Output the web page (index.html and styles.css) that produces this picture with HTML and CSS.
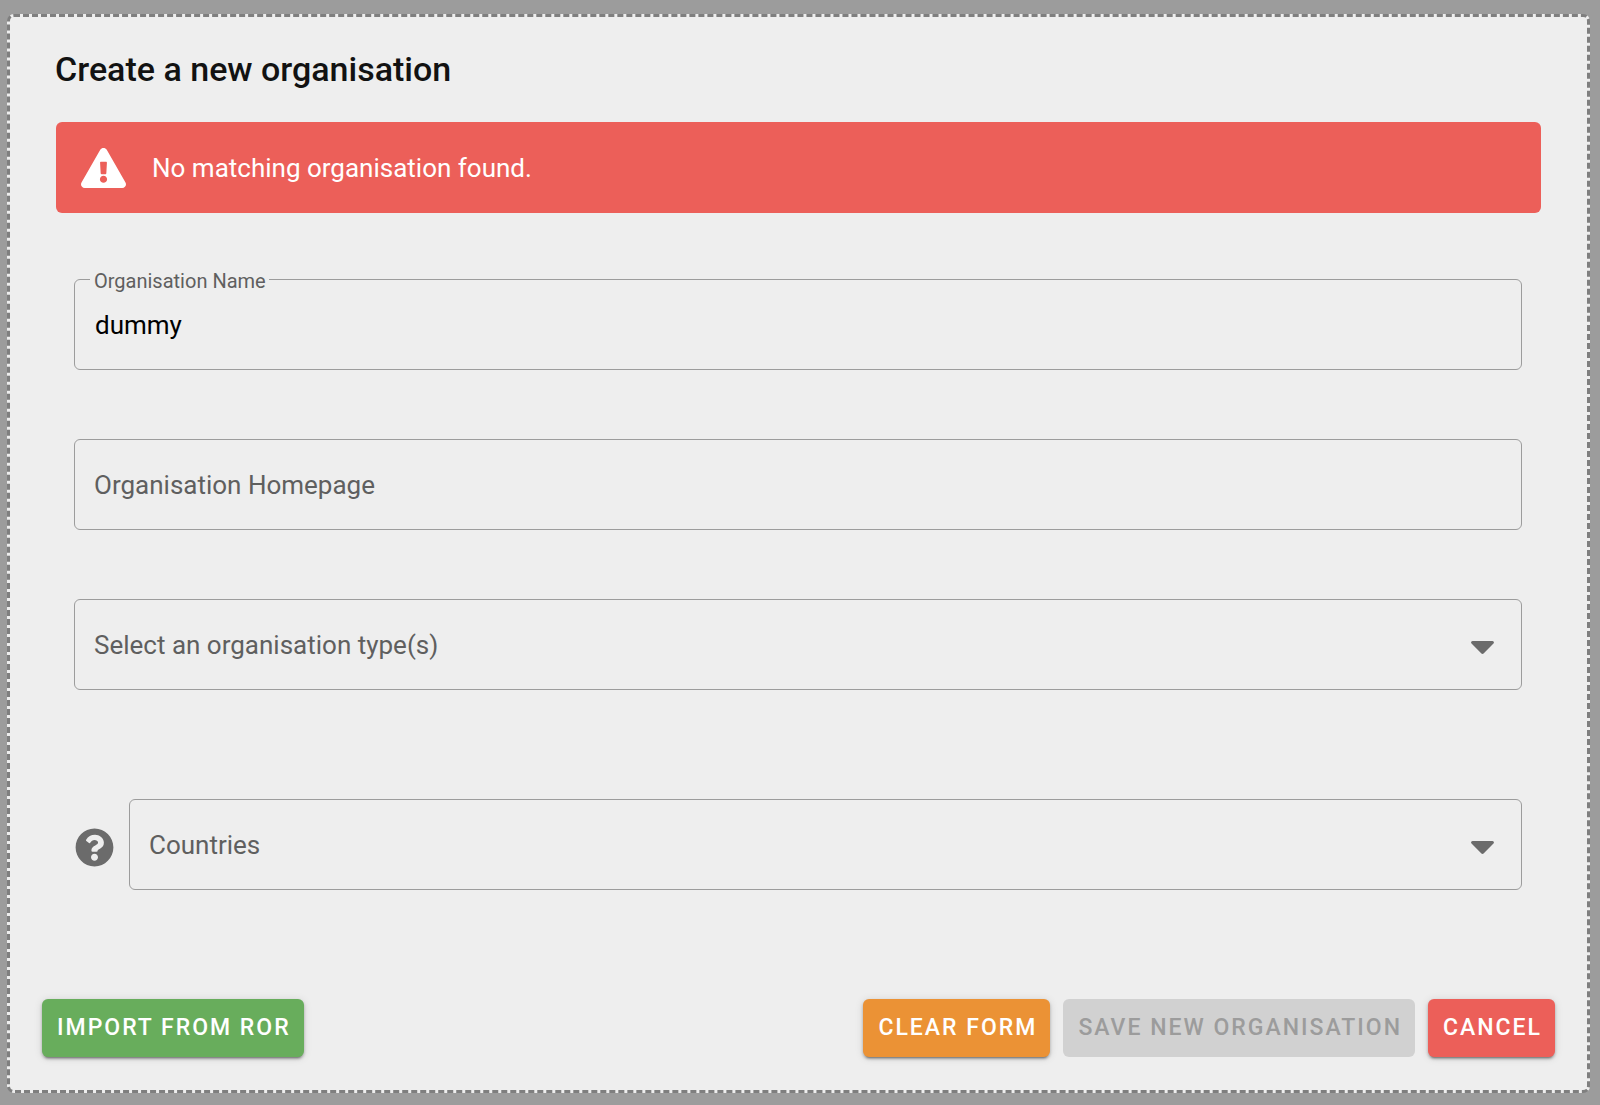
FILE: index.html
```html
<!DOCTYPE html>
<html lang="en">
<head>
  <meta charset="utf-8">
  <meta name="viewport" content="width=device-width, initial-scale=1">
  <title>Create a new organisation</title>
  <link rel="stylesheet" href="styles.css">
</head>
<body>
  <main class="card">
    <h1 class="card-title">Create a new organisation</h1>

    <div class="alert" role="alert">
      <svg class="alert-icon" viewBox="0 0 576 512" aria-hidden="true"><path d="M569.517 440.013C587.975 472.007 564.806 512 527.94 512H48.054c-36.937 0-59.999-40.055-41.577-71.987L246.423 23.985c18.467-32.009 64.72-31.951 83.154 0l239.94 416.028zM288 354c-25.405 0-46 20.595-46 46s20.595 46 46 46 46-20.595 46-46-20.595-46-46-46zm-43.673-165.346l7.418 136c.347 6.364 5.609 11.346 11.982 11.346h48.546c6.373 0 11.635-4.982 11.982-11.346l7.418-136c.375-6.874-5.098-12.654-11.982-12.654h-63.383c-6.884 0-12.356 5.78-11.981 12.654z"/></svg>
      <p class="alert-text">No matching organisation found.</p>
    </div>

    <form class="form" id="organisation-form">
      <div class="field">
        <input class="control" id="name" type="text" value="dummy">
        <label class="label label-floating" for="name">Organisation Name</label>
      </div>
      <div class="field">
        <input class="control" id="homepage" type="text">
        <label class="label" for="homepage">Organisation Homepage</label>
      </div>
      <div class="field">
        <select class="control" id="types"><option value=""></option></select>
        <label class="label" for="types">Select an organisation type(s)</label>
        <svg class="caret" viewBox="0 192 320 169" aria-hidden="true"><path d="M31.3 192h257.3c17.8 0 26.7 21.5 14.1 34.1L174.1 354.8c-7.8 7.8-20.5 7.8-28.3 0L17.2 226.1C4.6 213.5 13.5 192 31.3 192z"/></svg>
      </div>
      <div class="field-row">
        <svg class="help" viewBox="0 0 512 512" aria-hidden="true"><path d="M504 256c0 136.997-111.043 248-248 248S8 392.997 8 256C8 119.083 119.043 8 256 8s248 111.083 248 248zM262.655 90c-54.497 0-89.255 22.957-116.549 63.758-3.536 5.286-2.353 12.415 2.715 16.258l34.699 26.31c5.205 3.947 12.621 3.008 16.665-2.122 17.864-22.658 30.113-35.797 57.303-35.797 20.429 0 45.698 13.148 45.698 32.958 0 14.976-12.363 22.667-32.534 33.976C247.128 238.528 216 254.941 216 296v4c0 6.627 5.373 12 12 12h56c6.627 0 12-5.373 12-12v-1.333c0-28.462 83.186-29.647 83.186-106.667 0-58.002-60.165-102-116.531-102zM256 338c-25.365 0-46 20.635-46 46 0 25.364 20.635 46 46 46s46-20.636 46-46c0-25.365-20.635-46-46-46z"/></svg>
        <div class="field">
          <select class="control" id="countries"><option value=""></option></select>
          <label class="label" for="countries">Countries</label>
          <svg class="caret" viewBox="0 192 320 169" aria-hidden="true"><path d="M31.3 192h257.3c17.8 0 26.7 21.5 14.1 34.1L174.1 354.8c-7.8 7.8-20.5 7.8-28.3 0L17.2 226.1C4.6 213.5 13.5 192 31.3 192z"/></svg>
        </div>
      </div>
    </form>

    <div class="actions">
      <button class="button button-import" type="button">IMPORT FROM ROR</button>
      <div class="actions-end">
        <button class="button button-clear" type="reset" form="organisation-form">CLEAR FORM</button>
        <button class="button" type="submit" form="organisation-form" disabled>SAVE NEW ORGANISATION</button>
        <button class="button button-cancel" type="button">CANCEL</button>
      </div>
    </div>
  </main>
</body>
</html>
```
FILE: styles.css
```css
* {
  box-sizing: border-box;
}

body {
  margin: 0;
  padding: 14px 10px 12px 7px;
  background: #9c9c9c;
  color: #121212;
  font-family: Roboto, "Liberation Sans", sans-serif;
  font-size: 26px;
  line-height: 40px;
}

.card {
  padding: 32px 32px 33px;
  border: 3px dashed #7f7f7f;
  border-radius: 7px;
  background: #eeeeee;
}

.card-title {
  margin: 0 14px 33px 13px;
  font-size: 34px;
  font-weight: 500;
  line-height: 40px;
}

.alert {
  display: flex;
  align-items: center;
  gap: 26px;
  min-height: 91px;
  margin: 0 14px;
  padding: 0 25px;
  border-radius: 6px;
  background: #ec5f59;
  color: #ffffff;
}

.alert-icon {
  width: 45px;
  height: 40px;
  fill: currentColor;
}

.alert-text {
  margin: 0;
}

.form {
  display: grid;
  gap: 69px;
  margin: 66px 33px 109px 32px;
}

.field {
  position: relative;
  display: grid;
  flex: 1;
  align-items: center;
}

.control,
.label,
.caret {
  grid-area: 1 / 1;
}

.control {
  width: 100%;
  height: 91px;
  padding: 0 20px;
  border: 1px solid #9c9c9c;
  border-radius: 6px;
  background: transparent;
  color: #000000;
  font: inherit;
  appearance: none;
}

.label {
  justify-self: start;
  margin-left: 20px;
  color: #5f5f5f;
  pointer-events: none;
}

.label-floating {
  position: absolute;
  top: -10px;
  left: 16px;
  margin: 0;
  padding: 0 3px 0 4px;
  background: #eeeeee;
  font-size: 20px;
  line-height: 24px;
}

.caret {
  justify-self: end;
  width: 25px;
  height: 13px;
  margin: 6px 27px 0 0;
  fill: #6b6b6b;
  pointer-events: none;
}

.field-row {
  display: flex;
  align-items: center;
  gap: 15px;
  margin-top: 40px;
}

.help {
  width: 39px;
  height: 39px;
  margin: 6px 0 0 1px;
  fill: #6b6b6b;
}

.actions,
.actions-end {
  display: flex;
  flex-wrap: wrap;
  gap: 13px;
}

.actions {
  justify-content: space-between;
}

.button {
  height: 58px;
  padding: 0 13px 0 15px;
  border: 0;
  border-radius: 6px;
  color: #ffffff;
  font: 500 23px/36px Roboto, "Liberation Sans", sans-serif;
  letter-spacing: 2px;
  box-shadow: 0 4px 2px -3px rgba(0, 0, 0, 0.3), 0 2px 3px rgba(0, 0, 0, 0.25), 0 1px 8px rgba(0, 0, 0, 0.12);
}

.button-import {
  background: #68ad5c;
}

.button-clear {
  background: #eb9235;
}

.button-cancel {
  background: #ec5f59;
}

.button:disabled {
  background: #d1d1d1;
  color: #9c9c9c;
  box-shadow: none;
}
```
